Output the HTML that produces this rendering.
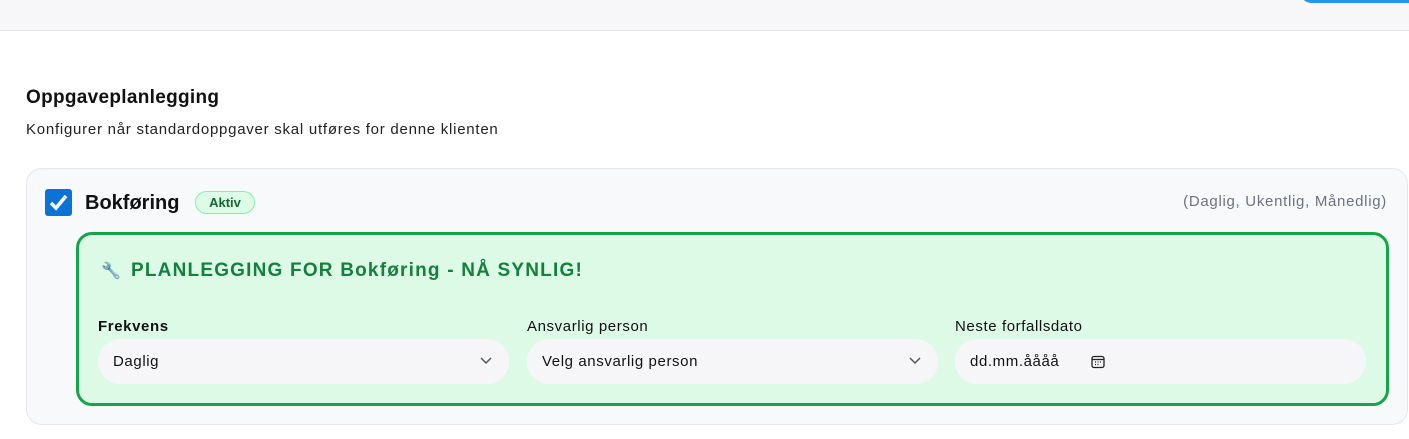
<!DOCTYPE html>
<html><head><style>
*{box-sizing:border-box;margin:0;padding:0}
body{width:1409px;height:439px;background:#fff;font-family:"Liberation Sans",sans-serif;position:relative;overflow:hidden;color:#111}
.top{position:absolute;left:0;top:0;width:1409px;height:31px;background:#f7f7fa;border-bottom:1px solid #e3e3ea}
.btn{position:absolute;left:1300px;top:-20px;width:140px;height:23px;background:#2196f3;border-radius:12px}
.a{position:absolute;white-space:nowrap}
.card{position:absolute;left:26px;top:168px;width:1382px;height:257px;background:#f8f9fb;border:1px solid #e5e7eb;border-radius:16px}
.cb{position:absolute;left:45px;top:189px;width:27px;height:27px;background:#0b72d6;border-radius:3px}
.badge{position:absolute;left:195px;top:191px;width:60px;height:23px;border:1px solid #86efac;background:#dcfce7;border-radius:12px;font-size:13px;font-weight:bold;color:#166534;text-align:center;line-height:21px}
.green{position:absolute;left:76px;top:232px;width:1313px;height:174px;background:#dcfae6;border:3px solid #16a34a;border-radius:16px}
.inp{position:absolute;top:339px;height:45px;width:411px;background:#f6f6f9;border-radius:22px;font-size:15px;line-height:45px;padding-left:15px;color:#111;letter-spacing:0.6px}
.lbl{position:absolute;top:318px;font-size:15px;font-weight:bold;color:#111;letter-spacing:0.6px}
</style></head><body>
<div class="top"><div class="btn"></div></div>
<div class="a" style="left:26px;top:87px;font-size:19px;font-weight:bold;letter-spacing:0.3px">Oppgaveplanlegging</div>
<div class="a" style="left:26px;top:121px;font-size:15px;color:#222;letter-spacing:0.75px">Konfigurer når standardoppgaver skal utføres for denne klienten</div>
<div class="card"></div>
<div class="cb"><svg width="27" height="27" viewBox="0 0 27 27"><path d="M6 14 L11 19 L21 7" stroke="#fff" stroke-width="3.5" fill="none"/></svg></div>
<div class="a" style="left:85px;top:192px;font-size:20px;font-weight:bold">Bokføring</div>
<div class="badge">Aktiv</div>
<div class="a" style="right:22px;top:193px;font-size:15px;color:#6b7280;letter-spacing:0.7px">(Daglig, Ukentlig, Månedlig)</div>
<div class="green"></div>
<div class="a" style="left:101px;top:261px;font-size:16px;color:#a78bbf">🔧</div>
<div class="a" style="left:131px;top:260px;font-size:19px;font-weight:bold;color:#15803d;letter-spacing:1.2px">PLANLEGGING FOR Bokføring - NÅ SYNLIG!</div>
<div class="lbl" style="left:98px">Frekvens</div>
<div class="lbl" style="left:527px;font-weight:normal">Ansvarlig person</div>
<div class="lbl" style="left:955px;font-weight:normal">Neste forfallsdato</div>
<div class="inp" style="left:98px">Daglig<svg style="position:absolute;right:17px;top:18px" width="12" height="8" viewBox="0 0 12 8"><path d="M1 1 L6 6 L11 1" stroke="#555" stroke-width="1.5" fill="none"/></svg></div>
<div class="inp" style="left:527px">Velg ansvarlig person<svg style="position:absolute;right:17px;top:18px" width="12" height="8" viewBox="0 0 12 8"><path d="M1 1 L6 6 L11 1" stroke="#555" stroke-width="1.5" fill="none"/></svg></div>
<div class="inp" style="left:955px">dd.mm.åååå<svg style="position:absolute;left:136px;top:16px" width="14" height="14" viewBox="0 0 14 14"><rect x="1" y="1.5" width="12" height="11" rx="2" stroke="#222" stroke-width="1.3" fill="none"/><path d="M1 4.5 H13" stroke="#222" stroke-width="1.3"/><path d="M4 7h1M6.5 7h1M9 7h1M4 9.5h1M6.5 9.5h1" stroke="#222" stroke-width="1.2"/></svg></div>
</body></html>
